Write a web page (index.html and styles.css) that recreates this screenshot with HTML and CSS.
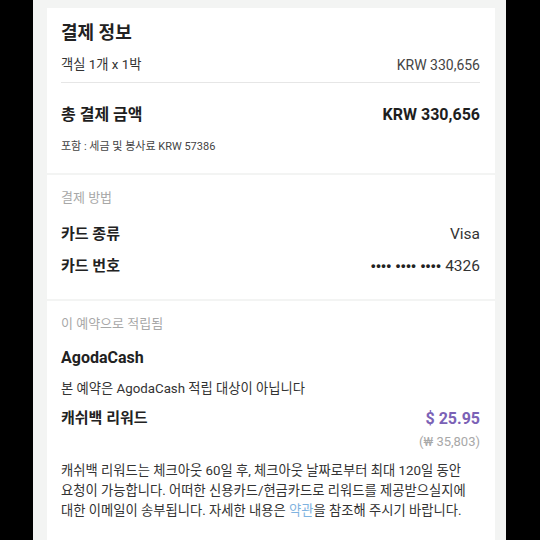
FILE: index.html
```html
<!DOCTYPE html>
<html lang="ko">
<head>
<meta charset="utf-8">
<link rel="stylesheet" href="styles.css">
</head>
<body>
<div class="screen">
  <section class="card card-summary">
    <h1 class="title">결제 정보</h1>
    <div class="row row-room">
      <span>객실 1개 x 1박</span>
      <span class="muted-val">KRW 330,656</span>
    </div>
    <div class="divider"></div>
    <div class="row row-total">
      <span>총 결제 금액</span>
      <span>KRW 330,656</span>
    </div>
    <p class="tax">포함 : 세금 및 봉사료 KRW 57386</p>
  </section>

  <section class="card card-payment">
    <h2 class="label">결제 방법</h2>
    <div class="row row-pay">
      <span class="key">카드 종류</span>
      <span class="val">Visa</span>
    </div>
    <div class="row row-pay">
      <span class="key">카드 번호</span>
      <span class="val"><span class="dots">•••• •••• ••••</span> 4326</span>
    </div>
  </section>

  <section class="card card-earn">
    <h2 class="label">이 예약으로 적립됨</h2>
    <h3 class="brand">AgodaCash</h3>
    <p class="note">본 예약은 AgodaCash 적립 대상이 아닙니다</p>
    <div class="row row-cash">
      <span class="key">캐쉬백 리워드</span>
      <span class="usd">$ 25.95</span>
    </div>
    <div class="krw">(₩ 35,803)</div>
    <p class="desc">캐쉬백 리워드는 체크아웃 60일 후, 체크아웃 날짜로부터 최대 120일 동안<br>요청이 가능합니다. 어떠한 신용카드/현금카드로 리워드를 제공받으실지에<br>대한 이메일이 송부됩니다. 자세한 내용은 <span class="link">약관</span>을 참조해 주시기 바랍니다.</p>
  </section>
</div>
</body>
</html>
```

FILE: styles.css
```css
* { box-sizing: border-box; }
html, body {
  margin: 0;
  padding: 0;
  background: #000;
  height: 540px;
  overflow: hidden;
}
body {
  display: flex;
  justify-content: flex-start;
  font-family: Roboto, "Noto Sans CJK KR", "Noto Sans", sans-serif;
  color: #222;
}
.screen {
  margin-left: 33px;
  width: 473px;
  height: 540px;
  background: #f3f4f3;
  padding: 8px 11px 0 14px;
  display: flex;
  flex-direction: column;
  gap: 2px;
}
.card {
  background: #fff;
  padding: 0 15px 0 14px;
}
.card-summary {
  height: 165px;
  padding-top: 13px;
}
.title {
  margin: 0;
  font-size: 18px;
  font-weight: 700;
  line-height: 24px;
  color: #222;
}
.row {
  display: flex;
  justify-content: space-between;
  align-items: center;
}
.row-room {
  margin-top: 11px;
  font-size: 13.3px;
  line-height: 18px;
  color: #333;
}
.muted-val { color: #444; font-size: 14px; }
.divider {
  margin-top: 8px;
  height: 1px;
  background: #e6e6e6;
}
.row-total {
  margin-top: 21px;
  font-size: 16px;
  font-weight: 700;
  line-height: 22px;
  color: #1e1e1e;
}
.tax {
  margin: 13px 0 0;
  font-size: 11px;
  line-height: 16px;
  color: #444;
}
.card-payment {
  height: 124px;
  padding-top: 14px;
}
.label {
  margin: 0;
  font-size: 13px;
  font-weight: 400;
  line-height: 18px;
  color: #a8a8a8;
}
.row-pay {
  margin-top: 17px;
  font-size: 15px;
  line-height: 21px;
}
.row-pay + .row-pay { margin-top: 10px; }
.key { font-weight: 700; color: #222; }
.val { color: #333; font-size: 15.5px; }
.dots {
  font-family: "Liberation Sans", sans-serif;
  font-size: 13px;
  font-weight: 700;
  letter-spacing: 0.6px;
  vertical-align: 1px;
  color: #222;
}
.card-earn {
  flex: 1;
  padding-top: 14px;
}
.brand {
  margin: 14px 0 0;
  font-size: 16px;
  font-weight: 700;
  line-height: 22px;
  color: #222;
}
.note {
  margin: 11px 0 0;
  font-size: 13.3px;
  line-height: 18px;
  color: #333;
}
.row-cash {
  margin-top: 10px;
  font-size: 15px;
  line-height: 21px;
}
.usd {
  font-size: 16px;
  font-weight: 700;
  color: #7b62b6;
}
.krw {
  text-align: right;
  margin-top: 4px;
  font-size: 13px;
  line-height: 18px;
  color: #a8a8a8;
}
.desc {
  margin: 10px 0 0;
  font-size: 13.3px;
  line-height: 20px;
  color: #333;
}
.link { color: #7fb3e0; }
```
